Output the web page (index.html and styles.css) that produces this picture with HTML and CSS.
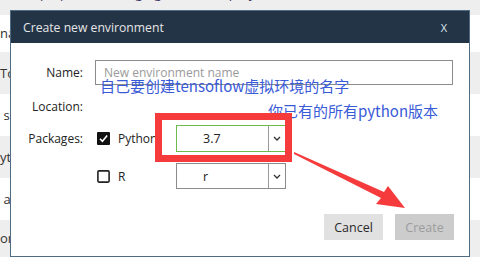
FILE: index.html
```html
<!DOCTYPE html>
<html lang="zh-CN">
<head>
    <meta charset="UTF-8">
    <meta name="viewport" content="width=device-width, initial-scale=1.0">
    <title>Create new environment</title>
    <link rel="stylesheet" href="styles.css">
</head>
<body>

    <!-- page behind the dialog -->
    <div class="toolbar"><span>pp gg py</span></div>
    <div class="list">
        <div class="list-row"><span>na</span></div>
        <div class="list-row"><span>Too</span></div>
        <div class="list-row"><span>&nbsp;s</span></div>
        <div class="list-row"><span>yt</span></div>
        <div class="list-row"><span>&nbsp;a</span></div>
        <div class="list-row"><span>or</span></div>
        <div class="list-row"></div>
    </div>

    <!-- dialog -->
    <div class="dialog">
        <div class="dialog-header">
            <span>Create new environment</span>
            <span class="close">X</span>
        </div>

        <div class="dialog-body">
            <div class="form-row row-name">
                <label for="envName">Name:</label>
                <input type="text" id="envName" placeholder="New environment name">
            </div>

            <div class="form-row row-location">
                <label>Location:</label>
                <div></div>
            </div>

            <div class="form-row row-python">
                <label>Packages:</label>
                <div class="pkg">
                    <div class="pkg-check">
                        <svg class="box" width="13" height="13" viewBox="0 0 13 13">
                            <rect x="0" y="0" width="13" height="13" rx="1" fill="#111"/>
                            <path d="M3 6.8 L5.4 9.2 L10.2 3.6" fill="none" stroke="#fff" stroke-width="1.6"/>
                        </svg>
                        <span>Python</span>
                    </div>
                    <div class="select active">
                        <span class="value">3.7</span>
                        <span class="arrow">
                            <svg width="8" height="5" viewBox="0 0 8 5"><path d="M1 1 L4 4 L7 1" fill="none" stroke="#333" stroke-width="1.3"/></svg>
                        </span>
                    </div>
                </div>
            </div>

            <div class="form-row row-r">
                <div></div>
                <div class="pkg">
                    <div class="pkg-check">
                        <svg class="box" width="13" height="13" viewBox="0 0 13 13">
                            <rect x="0.9" y="0.9" width="11.2" height="11.2" rx="1" fill="#fff" stroke="#222" stroke-width="1.6"/>
                        </svg>
                        <span>R</span>
                    </div>
                    <div class="select">
                        <span class="value">r</span>
                        <span class="arrow">
                            <svg width="8" height="5" viewBox="0 0 8 5"><path d="M1 1 L4 4 L7 1" fill="none" stroke="#333" stroke-width="1.3"/></svg>
                        </span>
                    </div>
                </div>
            </div>

            <div class="dialog-footer">
                <button class="btn btn-cancel">Cancel</button>
                <button class="btn btn-create" disabled>Create</button>
            </div>
        </div>
    </div>

    <!-- annotations drawn over the screenshot -->
    <div class="note note-name">自己要创建tensoflow虚拟环境的名字</div>
    <div class="note note-python">你已有的所有python版本</div>
    <div class="red-box"></div>
    <svg class="red-arrow" width="480" height="267" viewBox="0 0 480 267">
        <polygon points="294,152 384,192 388,186 405,208 376,204 381,198 294,154" fill="#f53b3b"/>
    </svg>

</body>
</html>
```

FILE: styles.css
```css
* {
    box-sizing: border-box;
}

body {
    margin: 0;
    width: 480px;
    height: 267px;
    overflow: hidden;
    position: relative;
    background-color: #fff;
    font-family: "Open Sans", "Noto Sans", sans-serif;
    font-size: 12px;
    color: #222;
}

/* background page */
.toolbar {
    height: 15px;
    background-color: #eeeeee;
    overflow: hidden;
}

.toolbar span {
    display: block;
    margin-top: -16px;
    padding-left: 40px;
    font-size: 13px;
    line-height: 18px;
    color: #3b3163;
    word-spacing: 40px;
    letter-spacing: 12px;
}

.list-row {
    height: 42px;
    line-height: 42px;
    font-size: 13px;
    color: #333;
    white-space: nowrap;
}

.list-row span {
    display: block;
    width: 10px;
    overflow: hidden;
}

.list-row:nth-child(1) {
    height: 37px;
    line-height: 37px;
}

.list-row:nth-child(even) {
    background-color: #eeeeee;
}

.list-row:nth-child(6) {
    height: 37px;
    line-height: 37px;
}

.list-row:last-child {
    height: 10px;
}

/* dialog */
.dialog {
    position: absolute;
    left: 10px;
    top: 10px;
    width: 460px;
    height: 247px;
    background-color: #fff;
    border: 1px solid #4f6c84;
}

.dialog-header {
    height: 32px;
    background-color: #243447;
    color: #e6e6e6;
    display: flex;
    align-items: center;
    justify-content: space-between;
    padding: 0 22px 0 12px;
    font-size: 12.2px;
}

.close {
    font-size: 11px;
    color: #dde6f0;
}

.dialog-body {
    padding: 17px 16px 0 0;
}

.form-row {
    display: grid;
    grid-template-columns: 72px 1fr;
    column-gap: 12px;
    align-items: center;
}

.form-row label {
    text-align: right;
}

.row-name {
    height: 25px;
}

.row-name input {
    height: 25px;
    border: 1px solid #8c8c8c;
    padding: 0 8px;
    font-family: inherit;
    font-size: 12px;
}

.row-name input::placeholder {
    color: #9a9a9a;
}

.row-location {
    height: 20px;
    margin-top: 11px;
}

.row-python {
    margin-top: 9px;
}

.row-r {
    margin-top: 11px;
}

.pkg {
    display: flex;
    align-items: center;
}

.pkg-check {
    width: 81px;
    display: flex;
    align-items: center;
    gap: 8px;
    padding-left: 2px;
}

.box {
    flex: none;
}

.select {
    width: 110px;
    height: 27px;
    border: 1px solid #8c8c8c;
    display: flex;
    align-items: center;
}

.row-r .select {
    height: 26px;
}

.select.active {
    border-color: #6dbb4b;
}

.select .value {
    flex: 1;
    padding-left: 26px;
    font-size: 12.5px;
}

.select .arrow {
    width: 17px;
    height: 100%;
    border-left: 1px solid #9a9a9a;
    display: flex;
    align-items: center;
    justify-content: center;
}

.dialog-footer {
    display: flex;
    justify-content: flex-end;
    gap: 12px;
    margin-top: 25px;
    margin-right: -1px;
}

.btn {
    width: 59px;
    height: 26px;
    border: none;
    font-family: inherit;
    font-size: 12.5px;
    padding: 0;
}

.btn-cancel {
    background-color: #e1e1e1;
    color: #2a2a2a;
}

.btn-create {
    background-color: #cccccc;
    color: #9c9c9c;
}

/* annotations */
.note {
    position: absolute;
    font-family: "Noto Sans CJK SC", sans-serif;
    font-size: 15px;
    line-height: 15px;
    color: #3a5bd8;
    white-space: nowrap;
}

.note-name {
    left: 100px;
    top: 78px;
}

.note-python {
    left: 268px;
    top: 103px;
}

.red-box {
    position: absolute;
    left: 155px;
    top: 113px;
    width: 137px;
    height: 49px;
    border: 7px solid #f53b3b;
}

.red-arrow {
    position: absolute;
    left: 0;
    top: 0;
}
```
